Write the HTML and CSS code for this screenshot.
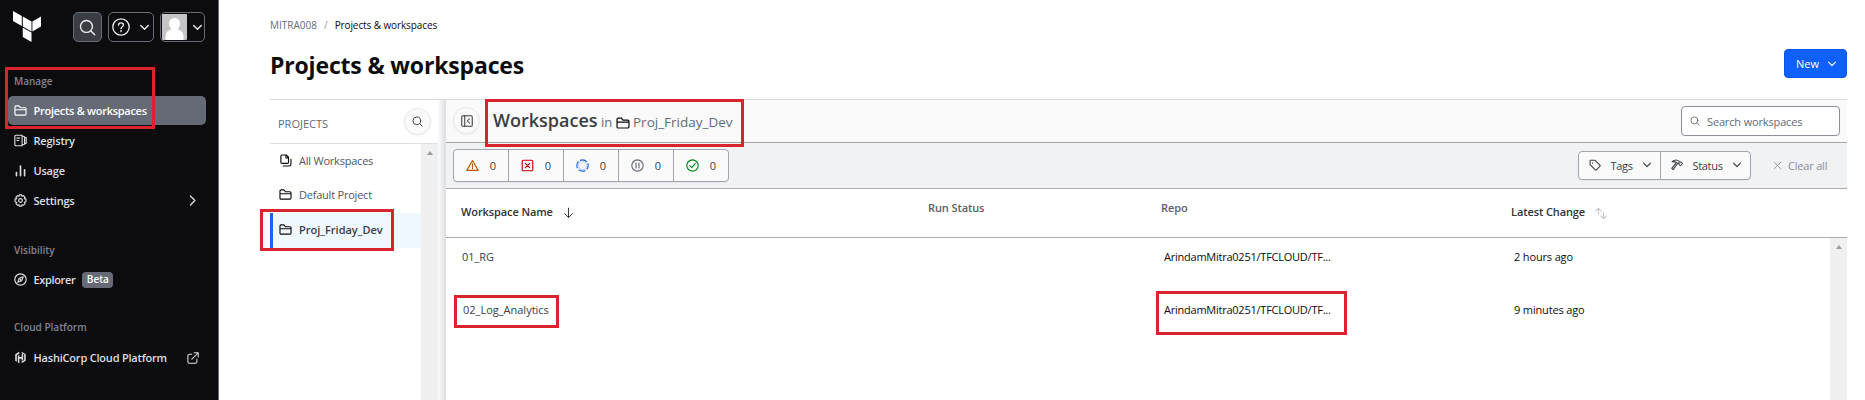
FILE: index.html
```html
<!DOCTYPE html>
<html lang="en">
<head>
<meta charset="utf-8">
<title>Projects &amp; workspaces</title>
<link rel="stylesheet" href="styles.css">
</head>
<body>
<svg class="defs" width="0" height="0">
  <defs>
    <symbol id="folder" viewBox="0 0 16 16"><path d="M1.2 12.3V3.600c0-.8.5-1.300 1.300-1.300h3.600l1.900 2.300h5.500c.8 0 1.300.5 1.300 1.300v6.400c0 .8-.5 1.400-1.300 1.400h-11c-.8 0-1.300-.6-1.300-1.400zM1.300 7.100h13.300"/></symbol>
    <symbol id="chev" viewBox="0 0 16 16"><path d="M2.500 5l5.500 5.500L13.500 5"/></symbol>
    <symbol id="search" viewBox="0 0 16 16"><circle cx="7" cy="7" r="5.600"/><path d="M11.200 11.200l3.600 3.600"/></symbol>
  </defs>
</svg>
<div class="app">
  <nav class="side">
    <div class="top">
      <svg class="logo" width="28" height="31" viewBox="0 0 28 31"><path d="M0 0l8.800 5v10L0 10zM9.800 5.600l8.700 5v10l-8.700-5zM19.400 10.600l8.600-5v10l-8.600 5zM9.800 16.700l8.700 4.900V31l-8.700-4.900z"/></svg>
      <span class="tbtn find"><svg class="ic" width="17" height="17"><use href="#search"/></svg></span>
      <span class="tbtn help"><svg class="ic" width="18" height="18" viewBox="0 0 18 18"><circle cx="9" cy="9" r="8.200"/><path d="M6.500 7.200c0-1.500 1-2.400 2.500-2.400s2.500.9 2.500 2.200c0 1.700-2.500 1.800-2.500 3.700M9 12.400v1.300"/></svg><svg class="ic chev" width="11" height="11"><use href="#chev"/></svg></span>
      <span class="tbtn user"><svg width="25" height="26" viewBox="0 0 25 26"><rect width="25" height="26" rx="1" fill="#c5c5c7"/><path fill="#fff" d="M12.500 4c3.400 0 5.500 2.400 5.500 5.500 0 2.600-1 4.300-2.500 5.700 3.500 1 6 3.300 6 7.300V26h-18v-3.500c0-4 2.500-6.300 6-7.300C8 13.800 7 12.100 7 9.500 7 6.400 9.100 4 12.500 4z"/></svg><svg class="ic chev" width="11" height="11"><use href="#chev"/></svg></span>
    </div>
    <div class="sect s1">Manage</div>
    <a class="item on"><svg class="ic" width="13" height="13"><use href="#folder"/></svg><span class="t-pw">Projects &amp; workspaces</span></a>
    <a class="item"><svg class="ic" width="13" height="13" viewBox="0 0 16 16"><path d="M10 14.500H2.500A1.500 1.500 0 0 1 1 13V3a1.500 1.500 0 0 1 1.500-1.500H10zM10 2.500l3 .8v9.400l-3 .8M13 4l2 .5v7l-2 .5M3.500 5h3.500M3.500 8H6"/></svg><span>Registry</span></a>
    <a class="item"><svg class="ic bars" width="13" height="13" viewBox="0 0 16 16"><path d="M3 14.500v-4M8 14.500v-12M13 14.500V7"/></svg><span>Usage</span></a>
    <a class="item"><svg class="ic" width="13" height="13" viewBox="0 0 16 16"><circle cx="8" cy="8" r="2.300"/><path d="M6.600 1h2.800l.5 1.900 1.700-.9 2 2-.9 1.700 2 .6v3.200l-2 .7.9 1.700-2 2-1.700-.8-.5 1.900H6.600l-.5-1.900-1.700.8-2-2 .9-1.700-2-.7V6.300l2-.6L2.400 4l2-2 1.700.9z"/></svg><span>Settings</span><svg class="ic end chev" width="11" height="11" viewBox="0 0 16 16"><path d="M5 1.500L11.500 8 5 14.500"/></svg></a>
    <div class="sect s2">Visibility</div>
    <a class="item"><svg class="ic" width="13" height="13" viewBox="0 0 16 16"><circle cx="8" cy="8" r="7"/><path d="M11.300 4.700L9.700 9.400l-5 1.900 1.700-4.800zM7.500 8.500l1-1"/></svg><span class="t-ex">Explorer</span><b class="beta">Beta</b></a>
    <div class="sect s3">Cloud Platform</div>
    <a class="item"><svg class="hcp" width="13" height="13" viewBox="0 0 16 16"><path d="M6.500 1L1.500 4v8l2 1.200V5.300l3-1.800zM4.700 6v8l1.900 1V9.400h2.800v2.700l1.900-1.100V3L9.400 4.100v3.300H6.600V5zM9.400 1v1.500l3.100 1.800V11l-3.100 1.900V15l5-3V4z"/></svg><span class="t-hcp">HashiCorp Cloud Platform</span><svg class="ic end ext" width="12" height="12" viewBox="0 0 16 16"><path d="M6.500 3H3C2 3 1.200 3.700 1.200 4.700v8.500c0 1 .8 1.700 1.800 1.700h8.500c1 0 1.700-.8 1.700-1.700V9.500M9.500 1H15v5.500M15 1L6.500 9.500"/></svg></a>
  </nav>

  <main class="main">
    <div class="crumbs"><span class="org">MITRA008</span><i>/</i><span class="cur">Projects &amp; workspaces</span></div>
    <header class="head"><h1>Projects &amp; workspaces</h1><button class="new"><span>New</span><svg class="ic chev" width="10" height="10"><use href="#chev"/></svg></button></header>
    <div class="body">
      <aside class="proj">
        <div class="ph"><span>PROJECTS</span><span class="round"><svg class="ic" width="11" height="11"><use href="#search"/></svg></span></div>
        <div class="pl">
          <div class="rows">
            <div class="pr"><svg class="ic" width="13" height="13" viewBox="0 0 16 16"><path d="M9 1.200H3.700C2.900 1.200 2.300 1.800 2.300 2.600v7.600c0 .8.600 1.400 1.400 1.400h6.600c.8 0 1.400-.6 1.400-1.400V4zM8.500 1.400v3.300h3M5 14.700h7.500c1.300 0 2.200-.9 2.200-2.200V6.500"/></svg><span>All Workspaces</span></div>
            <div class="pr"><svg class="ic" width="13" height="13"><use href="#folder"/></svg><span>Default Project</span></div>
            <div class="pr sel"><svg class="ic" width="13" height="13"><use href="#folder"/></svg><span>Proj_Friday_Dev</span></div>
          </div>
          <div class="sb"><i></i></div>
        </div>
      </aside>
      <div class="shade"></div>
      <section class="ws">
        <div class="wh">
          <span class="round"><svg class="ic" width="12" height="12" viewBox="0 0 16 16"><rect x="1" y="1" width="14" height="14" rx="1.500"/><path d="M5 1v14M11.500 5l-3 3 3 3"/></svg></span>
          <h2>Workspaces</h2><span class="in">in</span><svg class="ic fold" width="14" height="14"><use href="#folder"/></svg><span class="pn">Proj_Friday_Dev</span>
          <div class="field"><svg class="ic" width="10" height="10"><use href="#search"/></svg><span>Search workspaces</span></div>
        </div>
        <div class="wf">
          <div class="grp counts">
            <span class="or"><svg class="ic" width="13" height="13" viewBox="0 0 16 16"><path d="M8 1.800L15 14H1zM8 6v4M8 11.400v.6"/></svg>0</span>
            <span class="rd"><svg class="ic" width="13" height="13" viewBox="0 0 16 16"><rect x="1.500" y="1.500" width="13" height="13" rx="1.500"/><path d="M5.300 5.300l5.400 5.400M10.700 5.300l-5.400 5.400"/></svg>0</span>
            <span class="bl"><svg class="ic" width="13" height="13" viewBox="0 0 16 16"><circle cx="8" cy="8" r="5" fill="#eef3fd" stroke="#c6d7fa"/><circle cx="8" cy="8" r="7" stroke-linecap="butt" stroke-dasharray="9 2" stroke-dashoffset="4"/></svg>0</span>
            <span class="gr"><svg class="ic" width="13" height="13" viewBox="0 0 16 16"><circle cx="8" cy="8" r="7"/><path d="M6.200 5v6M9.800 5v6"/></svg>0</span>
            <span class="gn"><svg class="ic" width="13" height="13" viewBox="0 0 16 16"><circle cx="8" cy="8" r="7"/><path d="M4.800 8.200l2.300 2.300 4.300-4.700"/></svg>0</span>
          </div>
          <div class="grp drops">
            <span class="tags"><svg class="ic" width="12" height="12" viewBox="0 0 16 16"><path d="M1.500 2.300v5.200l6.800 7c.5.5 1 .5 1.500 0l4.700-4.700c.5-.5.5-1 0-1.500L7.700 1.600H2.200zM4.800 5v.6"/></svg><em>Tags</em><svg class="ic chev" width="10" height="10"><use href="#chev"/></svg></span>
            <span class="stat"><svg class="ic" width="12" height="12" viewBox="0 0 16 16"><path d="M1.500 3.500C4.500.8 8.500 1 11 3.200l1.200 1.200 1.300-.4 2 2-3 3-2-2 .3-1L9.500 5 2.800 14.200 1 12.500l6.500-8C5.500 3.500 3.500 3.500 1.500 3.500z"/></svg><em>Status</em><svg class="ic chev" width="10" height="10"><use href="#chev"/></svg></span>
          </div>
          <div class="clear"><svg class="ic" width="9" height="9" viewBox="0 0 16 16"><path d="M2 2l12 12M14 2L2 14"/></svg><span>Clear all</span></div>
        </div>
        <div class="th">
          <div class="c1"><span>Workspace Name</span><svg class="ic" width="11" height="12" viewBox="0 0 16 16"><path d="M8 1v13.500M2.500 9L8 14.500 13.500 9"/></svg></div>
          <div class="c2">Run Status</div><div class="c3">Repo</div>
          <div class="c4"><span>Latest Change</span><svg class="ic" width="12" height="13" viewBox="0 0 16 17"><path d="M4.500 10V1.500M1 5l3.500-3.500L8 5M11.500 7v8.500M8 12l3.500 3.500L15 12"/></svg></div>
        </div>
        <div class="tb">
          <div class="trs">
            <div class="tr"><span class="c1">01_RG</span><span class="c2"></span><span class="c3">ArindamMitra0251/TFCLOUD/TF...</span><span class="c4">2 hours ago</span></div>
            <div class="tr"><span class="c1 t-log">02_Log_Analytics</span><span class="c2"></span><span class="c3">ArindamMitra0251/TFCLOUD/TF...</span><span class="c4">9 minutes ago</span></div>
          </div>
          <div class="sb"><i></i></div>
        </div>
      </section>
    </div>
  </main>
  <div class="mark m1"></div><div class="mark m2"></div><div class="mark m3"></div><div class="mark m4"></div><div class="mark m5"></div>
</div>
</body>
</html>
```
FILE: styles.css
```css
* { box-sizing: border-box; }
body { margin: 0; font-family: "Open Sans", "Noto Sans", sans-serif; font-size: 11px; color: #3b3d45; background: #fff; }
.defs { display: block; position: absolute; }
.app { position: relative; display: flex; width: 1865px; height: 400px; overflow: hidden; white-space: nowrap; }
svg { flex: none; display: block; }
.ic { fill: none; stroke: currentColor; stroke-width: 1.4; stroke-linecap: round; stroke-linejoin: round; }
.chev { stroke-width: 1.9; }

.side { width: 219px; height: 400px; flex: none; background: #0c0c0e; border-right: 1px solid #656a76; color: #dedfe3; }
.top { display: flex; height: 67px; padding: 11px 0 0 13px; align-items: flex-start; }
.logo { fill: #fff; }
.tbtn { display: flex; align-items: center; justify-content: center; height: 30px; margin-top: 1px; border: 1px solid #656a76; border-radius: 5px; color: #efeff1; }
.tbtn .ic { stroke-width: 1.3; }
.tbtn .chev { stroke-width: 1.9; }
.find { width: 29px; margin-left: 32px; background: #3b3d45; }
.help { width: 46px; margin-left: 6px; gap: 9px; }
.user { width: 45px; margin-left: 6px; gap: 5px; }
.sect { height: 29px; padding: 6px 0 0 14px; line-height: 15px; font-size: 10px; font-weight: 600; color: #82858f; }
.s1 { padding-top: 7px; }
.s2 { margin-top: 22px; height: 28px; }
.s3 { margin-top: 20px; height: 29px; }
.item { display: flex; align-items: center; height: 29px; margin: 0 12px 1px 8px; padding: 0 8px 0 6px; border-radius: 5px; font-size: 11px; font-weight: 600; letter-spacing: -.2px; }
.item span { margin-left: 6.5px; }
.item .t-pw { letter-spacing: -.28px; }
.item .t-ex { letter-spacing: -.35px; }
.on { padding-bottom: 1px; background: #656a76; color: #fff; }
.item .end { margin-left: auto; }
.item .ext { margin-right: -1px; }
.bars { stroke-width: 2; }
.hcp { fill: #dedfe3; }
.beta { margin-left: 7px; width: 31px; height: 16px; line-height: 15px; text-align: center; border-radius: 4px; background: #656a76; color: #fff; font-size: 10px; font-weight: 600; letter-spacing: 0; }

.main { width: 1577px; margin-left: 51px; }
.crumbs { display: flex; height: 50px; line-height: 51px; font-size: 10px; color: #656a76; }
.crumbs i { margin: 0 7px; font-style: normal; color: #9a9ca5; }
.cur { color: #0c0c0e; letter-spacing: -.1px; }
.head { display: flex; justify-content: space-between; height: 49px; }
h1 { margin: 0; font-size: 23px; line-height: 31px; font-weight: 700; letter-spacing: -.17px; color: #0c0c0e; }
.new { display: flex; align-items: center; justify-content: center; gap: 8px; width: 63px; height: 29px; margin-top: -1px; padding: 0 0 0 2px; border: 1px solid #0c56e9; border-radius: 4px; background: #1060ff; color: #fff; font: 11px "Open Sans", sans-serif; }
.body { display: flex; height: 301px; border-top: 1px solid #d9dadd; }
.proj { width: 168px; }
.ph { display: flex; justify-content: space-between; align-items: center; height: 44px; padding: 0 7px 1px 8px; border-bottom: 1px solid #dedfe3; font-size: 11px; color: #656a76; }
.ph > span:first-child { padding-top: 4px; }
.round { display: flex; align-items: center; justify-content: center; width: 27px; height: 27px; border: 1px solid #e7e8ea; border-radius: 50%; background: #fafafa; box-shadow: 0 1px 2px #0000000d; color: #3b3d45; }
.pl { display: flex; height: 256px; }
.rows { flex: 1; }
.pr { display: flex; align-items: center; gap: 7px; height: 34px; padding: 0 0 1px 9px; color: #525661; letter-spacing: -.22px; }
.pr .ic { color: #0c0c0e; }
.pr + .pr { height: 35px; padding-bottom: 2px; }
.pr.sel { border-left: 3px solid #1c61f0; padding-left: 6px; background: #eff7ff; font-weight: 600; letter-spacing: 0; color: #3b3d45; }
.sb { width: 17px; background: #f0f0f0; display: flex; justify-content: center; padding-top: 7px; }
.sb i { width: 0; height: 0; border: 3.5px solid transparent; border-top: 0; border-bottom: 4px solid #9c9c9c; }
.shade { width: 8px; background: linear-gradient(90deg, #fcfcfc, #dcdde0); }

.ws { width: 1401px; }
.wh { display: flex; align-items: center; height: 43px; padding: 0 7px; background: #fafafa; border-bottom: 1px solid #a4a6ab; }
.wh .round { margin-top: -1px; }
h2 { width: 105px; margin: -3px 0 0 13px; font-size: 18px; line-height: 24px; font-weight: 600; letter-spacing: 0; }
.in { width: 12px; margin: 1px 3px 0 3px; font-size: 13px; color: #656a76; }
.fold { color: #0c0c0e; margin-top: 3px; }
.pn { margin: 2px 0 0 3px; font-size: 13.5px; color: #656a76; }
.field { display: flex; align-items: center; gap: 7px; width: 159px; height: 30px; margin-left: auto; padding-left: 8px; border: 1px solid #8c909c; border-radius: 4px; background: #fff; color: #656a76; letter-spacing: -.15px; }
.wf { display: flex; align-items: center; height: 46px; padding: 0 20px 0 7px; background: #f1f2f3; border-bottom: 1px solid #a9abb0; }
.grp { display: flex; border: 1px solid #a2a5ad; border-radius: 4px; background: #fafafa; box-shadow: 0 1px 1px #0000000d; }
.grp > span { display: flex; align-items: center; justify-content: center; }
.grp > span + span { border-left: 1px solid #a2a5ad; }
.counts { width: 276px; height: 33px; }
.counts > span { flex: 1; gap: 11px; }
.or .ic { color: #bb5a00; } .rd .ic { color: #c00005; } .bl .ic { color: #1c61f0; } .gr .ic { color: #656a76; } .gn .ic { color: #008a22; }
.drops { height: 29px; margin: -1px 0 0 auto; }
.drops > span { gap: 9px; letter-spacing: -.3px; }
em { font-style: normal; }
.tags { width: 81px; } .stat { width: 90px; }
.drops .stat { padding-left: 2px; }
.drops .tags { padding-left: 2px; }
.clear { display: flex; align-items: center; gap: 6px; width: 54px; margin-left: 22px; color: #8c909c; letter-spacing: -.2px; }
.th { display: flex; height: 49px; border-bottom: 1px solid #a9abb0; font-weight: 600; line-height: 16px; color: #303239; letter-spacing: -.1px; }
.th > div { padding-top: 15px; display: flex; }
.th svg { margin: 3px 0 0 10px; }
.th .c2, .th .c3 { padding-top: 11px; color: #5c606b; }
.th .c4 svg { color: #c2c5cb; }
.c1 { width: 482px; padding-left: 15px; } .c2 { width: 233px; } .c3 { width: 350px; } .c4 { width: 200px; }
.tb { display: flex; height: 163px; }
.trs { flex: 1; }
.tr { display: flex; height: 53px; padding-top: 11px; line-height: 16px; }
.tr .c1 { padding-left: 16px; letter-spacing: -.05px; }
.tr .t-log { padding-left: 17px; letter-spacing: 0; }
.tr .c3, .tr .c4 { padding-left: 3px; color: #0c0c0e; }
.tr .c3 { letter-spacing: -.24px; }
.tr .c4 { letter-spacing: -.15px; }

/* highlight rectangles lying over the page */
.mark { position: absolute; border: 3px solid #d9232d; }
.m1 { left: 5px; top: 67px; width: 150px; height: 62px; }
.m2 { left: 260px; top: 209px; width: 134px; height: 42px; }
.m3 { left: 485px; top: 99px; width: 259px; height: 48px; }
.m4 { left: 454px; top: 295px; width: 105px; height: 33px; }
.m5 { left: 1156px; top: 291px; width: 191px; height: 44px; }
```
